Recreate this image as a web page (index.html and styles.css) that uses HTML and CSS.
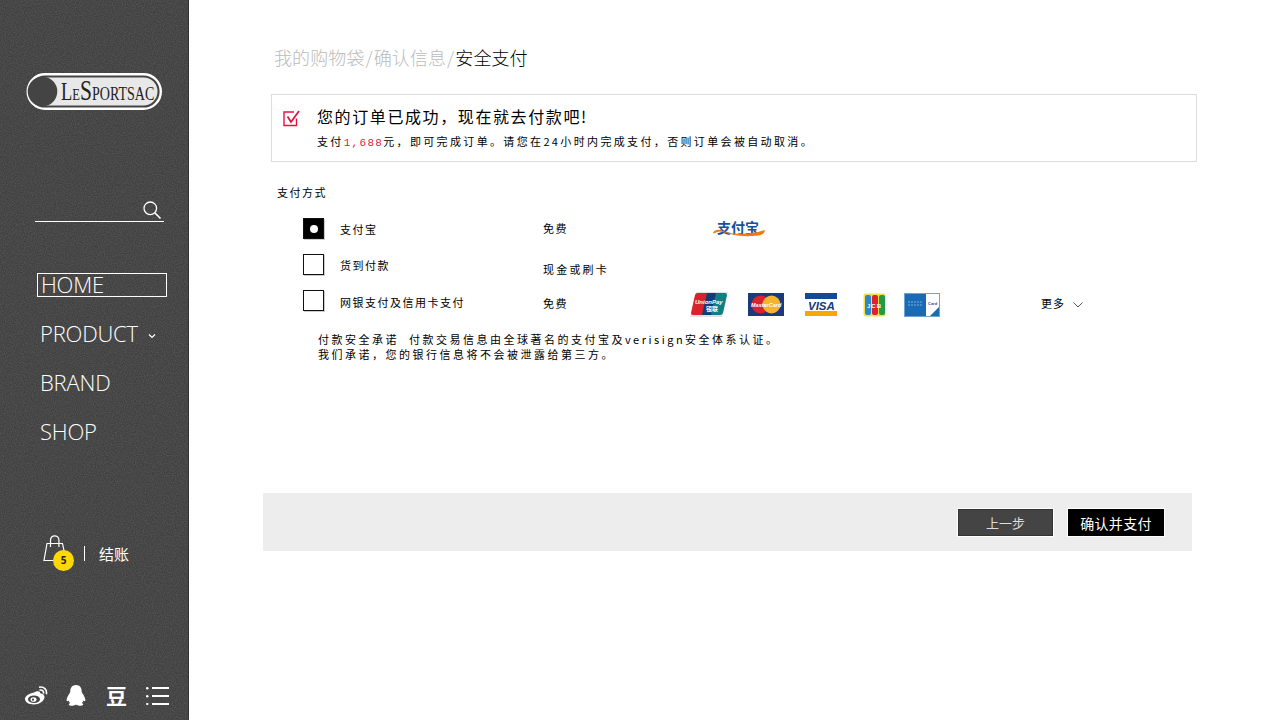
FILE: index.html
```html
<!DOCTYPE html>
<html lang="zh">
<head>
<meta charset="utf-8">
<title>安全支付</title>
<link rel="stylesheet" href="styles.css">
</head>
<body>
<aside class="side">
  <svg class="logo" width="136" height="37" viewBox="0 0 136 37">
    <rect x="1.700" y="1.200" width="133.100" height="34.600" rx="17.300" fill="#444" stroke="#fff" stroke-width="2.400"/>
    <rect x="5" y="4.500" width="126.500" height="28" rx="14" fill="#e8e8e8"/>
    <circle cx="16.500" cy="18.500" r="14.800" fill="#444"/>
    <text class="logo-text" transform="translate(35 26.500) scale(.74 1)"><tspan font-size="25">L</tspan><tspan font-size="17">E</tspan><tspan font-size="29">S</tspan><tspan font-size="19">PORTSAC</tspan></text>
  </svg>
  <div class="search">
    <svg width="20" height="20" viewBox="0 0 20 20" fill="none" stroke="#fff">
      <circle cx="8.300" cy="8.300" r="6.300" stroke-width="1.300"/>
      <path d="M13 13l5.500 5.500" stroke-width="1.700"/>
    </svg>
  </div>
  <nav class="nav">
    <a class="nav-item nav-on">HOME</a>
    <a class="nav-item">PRODUCT
      <svg class="nav-caret" width="8" height="6" viewBox="0 0 8 6" fill="none" stroke="#fff" stroke-width="1.200"><path d="M1 1.500l3 3 3-3"/></svg>
    </a>
    <a class="nav-item">BRAND</a>
    <a class="nav-item">SHOP</a>
  </nav>
  <div class="cart">
    <div class="bag">
      <svg width="24" height="27" viewBox="0 0 24 27" fill="none" stroke="#fff" stroke-width="1.200">
        <path d="M4 8.500h15.500L23 25.500H1z"/>
        <path d="M7.500 12V5a4.200 4.200 0 0 1 8.400 0v7"/>
      </svg>
      <span class="badge">5</span>
    </div>
    <span class="cart-bar"></span>
    <span class="cart-text">结账</span>
  </div>
  <div class="social">
    <svg width="24" height="20" viewBox="0 0 24 20">
      <path fill="#fff" d="M10 6.500c3.500-2 6-1.700 6.500 1 2.500.2 4 1.500 4 3.500 0 4-5.500 7.500-10.500 7.500-5 0-9-2-9-5.700 0-2.500 4-5.300 9-6.300z"/>
      <ellipse cx="10" cy="13.300" rx="6" ry="3.800" fill="#444"/>
      <ellipse cx="9.500" cy="13.500" rx="3" ry="2.300" fill="#fff"/>
      <circle cx="9" cy="13.700" r="1.100" fill="#444"/>
      <path fill="none" stroke="#fff" stroke-width="1.600" d="M15.500 4.200c2.500-.8 4.500 1 4 3.500M15 1.300c4.700-1.200 8.500 2.300 7.300 7"/>
    </svg>
    <svg width="20" height="21" viewBox="0 0 20 21">
      <path fill="#fff" d="M10 0c3.700 0 5.700 2.800 5.700 6.200 0 1 .4 1.500 1 2.500 1.300 2 2.700 4.500 2.700 6.500 0 1.300-1 1.300-2 .2-.2 1-.7 1.800-1.500 2.500 1 .5 1.500 1.100 1.200 1.800-.4.900-3 1.300-4.800.8-.8-.3-1.400-.7-2.300-.7s-1.500.4-2.300.7c-1.800.5-4.400.1-4.800-.8-.3-.7.200-1.300 1.200-1.800-.8-.7-1.300-1.500-1.500-2.500-1 1.100-2 1.100-2-.2 0-2 1.400-4.500 2.700-6.500.6-1 1-1.500 1-2.500C4.300 2.800 6.300 0 10 0z"/>
    </svg>
    <span class="dou">豆</span>
    <svg width="24" height="18" viewBox="0 0 24 18" fill="#fff">
      <rect x="0" y="0" width="2.500" height="2.500" rx="1.200"/><rect x="6" y="0" width="17" height="2"/>
      <rect x="0" y="8" width="2.500" height="2.500" rx="1.200"/><rect x="6" y="8" width="17" height="2"/>
      <rect x="0" y="16" width="2.500" height="2" rx="1"/><rect x="6" y="16" width="17" height="2"/>
    </svg>
  </div>
</aside>

<main class="main">
  <h1 class="crumbs"><span>我的购物袋</span><i>/</i><span>确认信息</span><i>/</i><b>安全支付</b></h1>

  <section class="notice">
    <svg class="notice-icon" width="17" height="17" viewBox="0 0 17 17" fill="none" stroke="#e8113f" stroke-width="1.400">
      <path d="M13.500 8.500v7H1V2h10"/>
      <path d="M4.500 6.500L8 12l8-11" stroke-width="1.800"/>
    </svg>
    <div>
      <h2 class="notice-title">您的订单已成功，现在就去付款吧!</h2>
      <p class="notice-sub">支付<em>1,688</em>元，即可完成订单。请您在24小时内完成支付，否则订单会被自动取消。</p>
    </div>
  </section>

  <h3 class="pay-title">支付方式</h3>

  <div class="pay-row row-a">
    <span class="box box-on"></span>
    <span class="pay-name">支付宝</span>
    <span class="pay-fee">免费</span>
    <svg class="alipay" width="54" height="24" viewBox="0 0 54 24">
      <text class="alipay-text" x="5" y="16.500">支付宝</text>
      <path fill="#ee7a12" d="M1 17c2-4 6-4 10-2 6 3 24 5 42-1-1 5-5 6-12 6-9 .5-18-.5-25-2.500-5-1.500-8-3-11-1.500-2 1-3 2-4 1z"/>
    </svg>
  </div>

  <div class="pay-row row-b">
    <span class="box"></span>
    <span class="pay-name">货到付款</span>
    <span class="pay-fee fee-low">现金或刷卡</span>
  </div>

  <div class="pay-row row-c">
    <span class="box"></span>
    <span class="pay-name">网银支付及信用卡支付</span>
    <span class="pay-fee">免费</span>
    <div class="cards">
      <svg class="card card-up" width="38" height="25" viewBox="0 0 38 25">
        <path fill="#e0e0e0" d="M6 0h32l-6 25H0z"/>
        <path fill="#d8232f" d="M8 1h13l-5 22H3a2 2 0 0 1-2-2L5 3a3 3 0 0 1 3-2z"/>
        <path fill="#143a78" d="M17 1h11l-5 22H12z"/>
        <path fill="#0f7f86" d="M26 1h9a2 2 0 0 1 2 2l-4 18a3 3 0 0 1-3 2h-9z"/>
        <text class="up-a" x="5" y="12">UnionPay</text>
        <text class="up-b" x="16" y="19">银联</text>
      </svg>
      <svg class="card card-mc" width="36" height="23" viewBox="0 0 36 23">
        <rect width="36" height="23" fill="#1a3a7c"/>
        <circle cx="12.500" cy="11.500" r="9" fill="#d8232f"/>
        <circle cx="23.500" cy="11.500" r="9" fill="#f4b52c"/>
        <text class="mc" x="3" y="14">MasterCard</text>
      </svg>
      <svg class="card card-visa" width="32" height="23" viewBox="0 0 32 23">
        <rect width="32" height="6" fill="#134a96"/>
        <rect y="18" width="32" height="5" fill="#f6a800"/>
        <text class="visa" x="3" y="16.500">VISA</text>
      </svg>
      <svg class="card card-jcb" width="24" height="24" viewBox="0 0 24 24">
        <rect x="0.500" y="0.500" width="22" height="23" rx="2" fill="#f2e24a"/>
        <rect x="2" y="2" width="6" height="20" rx="2" fill="#2a88cc"/>
        <rect x="9" y="2" width="6" height="20" rx="2" fill="#e0202c"/>
        <rect x="16" y="2" width="6" height="20" rx="2" fill="#20994a"/>
        <text class="jcb" x="4" y="15">JCB</text>
      </svg>
      <svg class="card card-ax" width="36" height="24" viewBox="0 0 36 24">
        <rect x="0.500" y="0.500" width="35" height="23" fill="#1a6bb5" stroke="#6aa5d8"/>
        <rect x="22" y="1" width="13" height="22" fill="#fff"/>
        <text class="amex" x="24" y="12">Card</text>
        <path fill="#1a6bb5" d="M35 14v9h-9z"/>
        <path stroke="#7fb0dc" d="M4 9h15M4 12h15" stroke-dasharray="2 1"/>
      </svg>
    </div>
    <span class="more">更多
      <svg width="10" height="6" viewBox="0 0 10 6" fill="none" stroke="#555"><path d="M.5.500l4.500 4.500L9.500.500"/></svg>
    </span>
  </div>

  <p class="promise">付款安全承诺&nbsp;&nbsp;付款交易信息由全球著名的支付宝及verisign安全体系认证。<br>我们承诺，您的银行信息将不会被泄露给第三方。</p>

  <div class="actions">
    <button class="btn btn-back">上一步</button>
    <button class="btn btn-pay">确认并支付</button>
  </div>
</main>
</body>
</html>
```

FILE: styles.css
```css
* { box-sizing: border-box; }
html, body { margin: 0; height: 720px; overflow: hidden; background: #fff; }
body {
  display: flex;
  font-family: "Noto Sans CJK SC", "Liberation Sans", sans-serif;
  color: #000;
}
h1, h2, h3, p { margin: 0; font-weight: 400; }
i, em { font-style: normal; }

/* sidebar */
.side {
  width: 189px;
  height: 720px;
  flex: none;
  padding: 73px 0 0 26px;
  display: flex;
  flex-direction: column;
  color: #fff;
  background-color: #404040;
  background-image: url("data:image/svg+xml,%3Csvg xmlns='http://www.w3.org/2000/svg' width='189' height='720'%3E%3Cfilter id='n' color-interpolation-filters='sRGB'%3E%3CfeTurbulence type='fractalNoise' baseFrequency='.9' numOctaves='2'/%3E%3CfeColorMatrix values='0 0 0 0 1 0 0 0 0 1 0 0 0 0 1 1 0 0 0 -.3'/%3E%3C/filter%3E%3Crect width='189' height='720' filter='url(%23n)' opacity='.2'/%3E%3C/svg%3E");
  border-right: 1px solid #333;
}
.logo { display: block; flex: none; }
.logo-text { font-family: "Liberation Serif", serif; fill: #222; }
.search {
  width: 129px;
  height: 22px;
  margin: 90px 0 0 9px;
  border-bottom: 1px solid #fff;
  display: flex;
  justify-content: flex-end;
  padding-right: 2px;
}
.nav {
  display: flex;
  flex-direction: column;
  margin: 51px 0 0 11px;
  font-family: "Open Sans", "Liberation Sans", sans-serif;
  font-weight: 300;
  font-size: 22px;
}
.nav-item {
  width: 130px;
  height: 24px;
  line-height: 22px;
  padding-left: 3px;
  margin-bottom: 25px;
  letter-spacing: -.2px;
  white-space: nowrap;
  display: block;
}
.nav-on { border: 1px solid #fff; line-height: 20px; }
.nav-caret { margin-left: 5px; vertical-align: 3px; }
.cart {
  display: flex;
  align-items: center;
  margin: 66px 0 0 16px;
  height: 36px;
}
.bag { position: relative; width: 24px; height: 27px; margin-top: -9px; margin-left: 1px; margin-right: -1px; }
.bag svg { display: block; }
.badge {
  position: absolute;
  left: 10px;
  top: 15px;
  width: 21px;
  height: 21px;
  border-radius: 50%;
  background: #ffd800;
  color: #222;
  font: 700 10px/21px "Open Sans", sans-serif;
  text-align: center;
}
.cart-bar { width: 1px; height: 15px; background: #fff; margin: 0 14px 0 18px; }
.cart-text { font-size: 15px; font-weight: 400; }
.social {
  display: flex;
  align-items: center;
  margin: 114px 0 0 -2px;
  gap: 18px;
}
.dou { font-size: 21px; font-weight: 700; line-height: 21px; width: 22px; margin-left: 2px; }

/* main */
.main { width: 929px; margin-left: 74px; padding-top: 45px; flex: none; }
.crumbs {
  display: flex;
  padding-left: 11px;
  height: 26px;
  font-size: 18px;
  line-height: 25px;
  font-weight: 300;
  color: #bbb;
  letter-spacing: .1px;
}
.crumbs i { margin: 0 1px 0 1px; }
.crumbs b { font-weight: 300; color: #000; }
.notice {
  margin: 23px -5px 0 8px;
  height: 68px;
  border: 1px solid #ddd;
  display: flex;
  padding: 6px 0 0 11px;
}
.notice-icon { margin: 9px 17px 0 0; flex: none; }
.notice-title { font-size: 16px; height: 29px; line-height: 30px; letter-spacing: 1.600px; font-weight: 400; }
.notice-sub { font-size: 11px; line-height: 22px; letter-spacing: 2.350px; white-space: nowrap; }
.notice-sub em { color: #f0163f; font-family: "Liberation Mono", monospace; letter-spacing: 1.300px; }
.pay-title { margin: 21px 0 0 14px; font-size: 11px; line-height: 18px; letter-spacing: 1.500px; }
.pay-row { display: flex; align-items: flex-start; margin-left: 40px; font-size: 11px; letter-spacing: 1.500px; }
.row-a { margin-top: 17px; height: 36px; }
.row-b { height: 36px; }
.row-c { height: 36px; }
.box { width: 21px; height: 21px; border: 1px solid #111; flex: none; margin-right: 16px; box-shadow: 1px 1px 0 #ccc; }
.box-on { background: #000; position: relative; }
.box-on::after { content: ""; position: absolute; left: 6px; top: 6px; width: 8px; height: 8px; border-radius: 50%; background: #fff; }
.pay-name { width: 203px; flex: none; line-height: 22px; white-space: nowrap; }
.row-c .pay-name { line-height: 24px; }
.pay-fee { width: 147px; flex: none; line-height: 21px; }
.fee-low { line-height: 30px; letter-spacing: 2.200px; }
.row-c .pay-fee { line-height: 26px; }
.alipay { margin: -2px 0 0 22px; flex: none; }
.alipay-text { font-size: 14px; font-weight: 700; fill: #1a4f9c; letter-spacing: 0; }
.cards { display: flex; align-items: center; width: 349px; flex: none; margin-top: 2px; letter-spacing: 0; }
.card { flex: none; }
.card-mc { margin-left: 20px; }
.card-visa { margin-left: 21px; }
.card-jcb { margin-left: 26px; }
.card-ax { margin-left: 17px; }
.up-a { font: italic 700 6px "Liberation Sans", sans-serif; fill: #fff; }
.up-b { font-size: 6px; font-weight: 700; fill: #fff; }
.mc { font: italic 700 5.500px "Liberation Sans", sans-serif; fill: #fff; }
.visa { font: italic 700 11.500px "Liberation Sans", sans-serif; fill: #14387f; }
.jcb { font: 700 6px "Liberation Sans", sans-serif; fill: #fff; letter-spacing: 1px; }
.amex { font: 700 4px "Liberation Sans", sans-serif; fill: #1a4f9c; }
.more { line-height: 26px; margin-left: 2px; white-space: nowrap; letter-spacing: 1px; }
.more svg { margin-left: 5px; vertical-align: 0; }
.promise { margin: 6px 0 0 55px; font-size: 11px; line-height: 15px; letter-spacing: 2.500px; white-space: nowrap; }
.actions {
  margin-top: 131px;
  height: 58px;
  background: #ededed;
  display: flex;
  justify-content: flex-end;
  align-items: flex-start;
  gap: 13px;
  padding: 15px 27px 0 0;
}
.btn {
  width: 98px;
  height: 29px;
  border: 1px solid #fff;
  font-family: inherit;
  padding: 0;
  color: #fff;
}
.btn-back { background: #444; color: #ddd; font-size: 13px; width: 97px; box-shadow: inset 0 0 0 1px #333; }
.btn-pay { background: #000; font-size: 14px; letter-spacing: .3px; }
```
